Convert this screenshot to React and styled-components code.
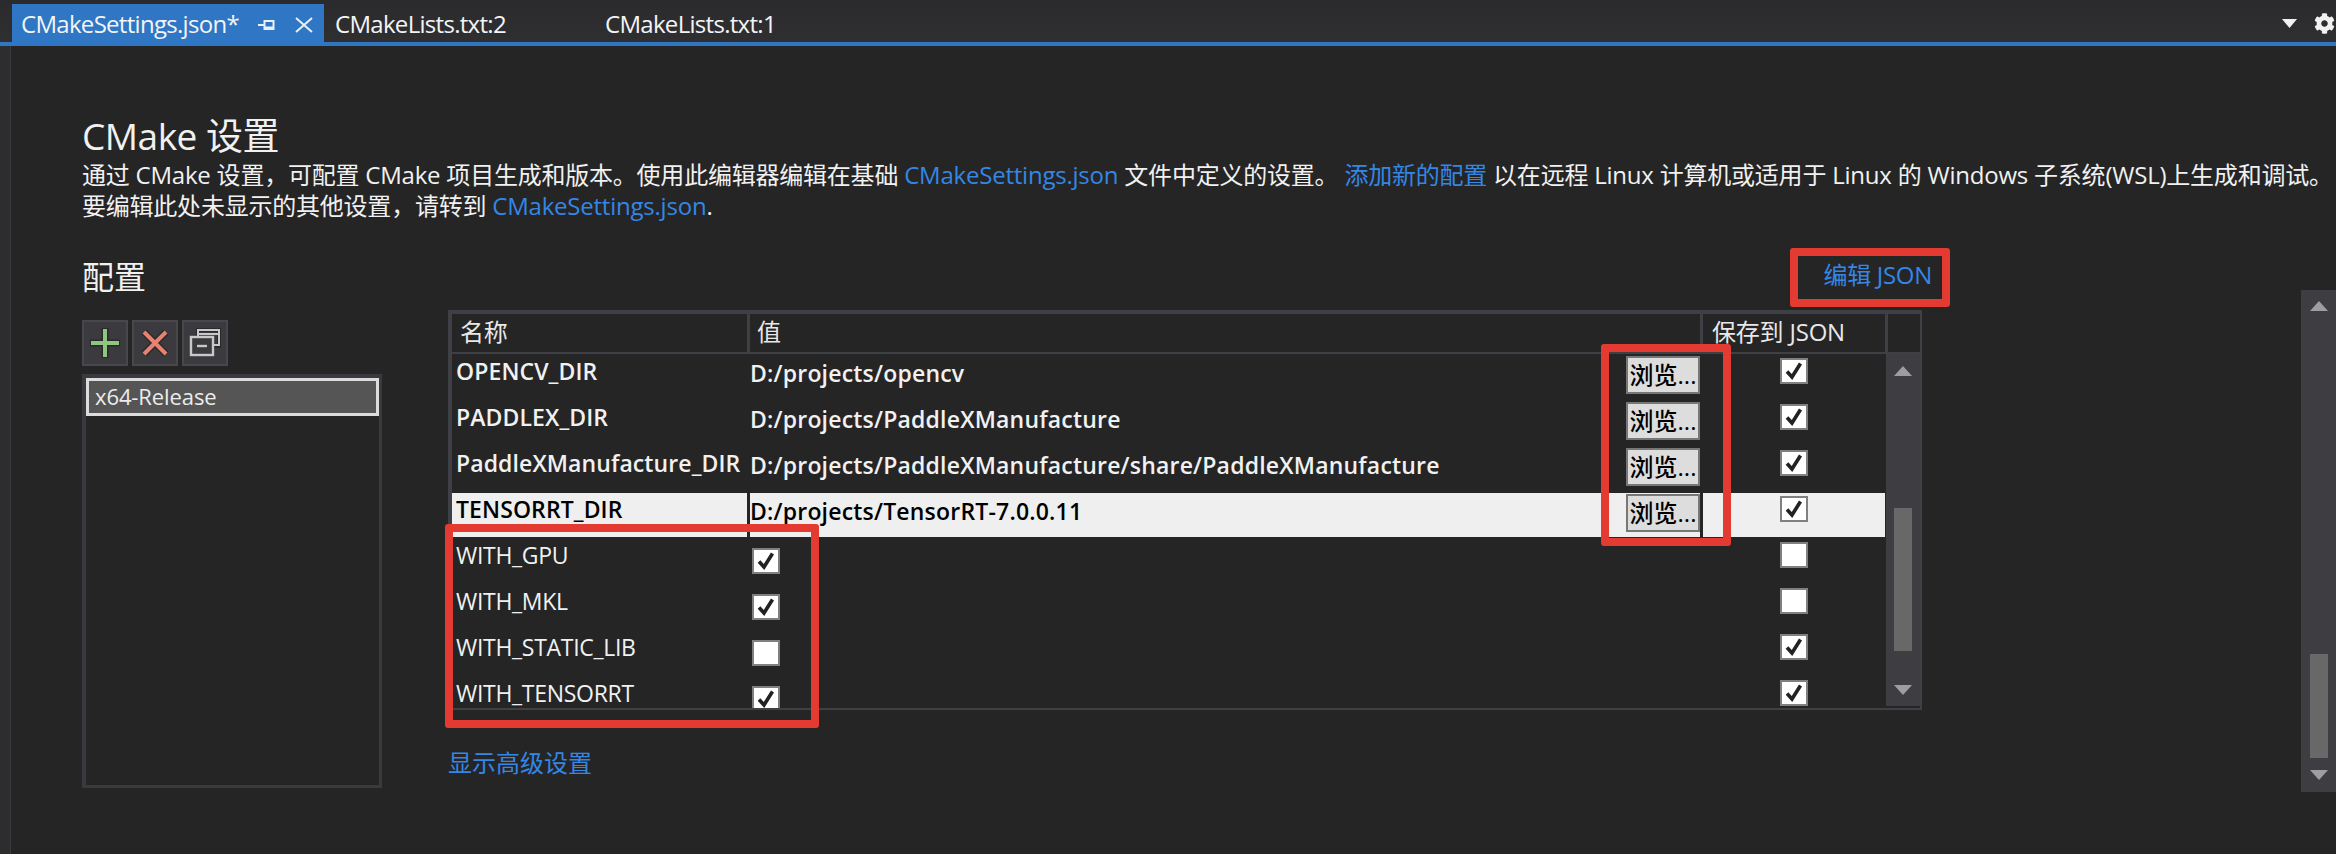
import React from "react";
import styled, { createGlobalStyle } from "styled-components";
import { FaCog } from "react-icons/fa";

const GlobalStyle = createGlobalStyle`
  html, body { margin: 0; padding: 0; background: #252526; }
  body { overflow: hidden; font-family: "Open Sans", "Noto Sans CJK SC", sans-serif; }
  * { box-sizing: border-box; }
`;

const Page = styled.div`
  position: relative;
  width: 2336px;
  height: 854px;
  overflow: hidden;
  background: #252526;
  color: #f1f1f1;
  display: flex;
  flex-direction: column;
`;

const TabBar = styled.div`
  height: 46px;
  flex: none;
  display: flex;
  align-items: flex-start;
  padding: 4px 0 0 12px;
  background: linear-gradient(#2b2b2e, #2f2f32);
  border-bottom: 4px solid #2f76c4;
`;

const Tab = styled.div`
  height: 42px;
  width: ${(p) => p.$width}px;
  flex: none;
  display: flex;
  align-items: center;
  padding-left: ${(p) => (p.$active ? 9 : 11)}px;
  background: ${(p) => (p.$active ? "#2f76c4" : "transparent")};
  font-size: 24px;
  line-height: 30px;
  letter-spacing: -0.7px;
  padding-bottom: 2px;
  color: #f4f4f4;
`;

const TabTitle = styled.span`
  width: ${(p) => p.$width}px;
  flex: none;
  white-space: nowrap;
`;

const TabIcons = styled.div`
  display: flex;
  align-items: center;
  gap: 20px;
  margin-top: 2px;
`;

const BarIcons = styled.div`
  margin-left: auto;
  height: 38px;
  display: flex;
  align-items: center;
  gap: 17px;
  margin-right: 1px;
  color: #f1f1f1;
`;

const Body = styled.div`
  flex: 1;
  display: flex;
  min-height: 0;
`;

const Gutter = styled.div`
  width: 11px;
  flex: none;
  background: #2d2d30;
  border-right: 1px solid #3a3a3f;
`;

const Content = styled.main`
  flex: 1;
  min-width: 0;
  padding: 67px 0 0 71px;
`;

const Title = styled.h1`
  margin: 0;
  font-size: 37px;
  line-height: 46px;
  font-weight: 400;
  letter-spacing: -0.5px;
  color: #f1f1f1;
`;

const Description = styled.p`
  margin: 0;
  font-size: 24px;
  line-height: 31px;
  white-space: nowrap;
  color: #f1f1f1;
  letter-spacing: -0.22px;
`;

const Link = styled.a`
  color: #3487e4;
  text-decoration: none;
`;

const ConfigHead = styled.div`
  width: 1850px;
  margin-top: 37px;
  height: 52px;
  display: flex;
  justify-content: space-between;
  align-items: flex-start;
`;

const SectionTitle = styled.h2`
  margin: 0;
  font-size: 32px;
  line-height: 38px;
  font-weight: 400;
  color: #f1f1f1;
`;

const EditLink = styled(Link)`
  font-size: 24px;
  line-height: 36px;
  margin-top: -1px;
  letter-spacing: -0.3px;
`;

const Columns = styled.div`
  display: flex;
  gap: 66px;
  align-items: flex-start;
`;

const Sidebar = styled.div`
  width: 300px;
  flex: none;
  padding-top: 10px;
  display: flex;
  flex-direction: column;
  gap: 8px;
`;

const ToolRow = styled.div`
  display: flex;
  gap: 4px;
`;

const ToolButton = styled.button`
  width: 46px;
  height: 46px;
  padding: 0;
  display: flex;
  align-items: center;
  justify-content: center;
  background: #3b3b3f;
  border: 2px solid #47474c;
`;

const ConfigList = styled.div`
  height: 414px;
  border: 4px solid #3a3a3e;
  border-width: 4px 3px 3px 4px;
`;

const ConfigItem = styled.div`
  height: 38px;
  border: 3px solid #dcdcdc;
  background: #555;
  padding-left: 6px;
  font-size: 22px;
  line-height: 30px;
  letter-spacing: -0.1px;
  color: #ececec;
`;

const TableColumn = styled.div`
  width: 1474px;
  flex: none;
`;

const Table = styled.div`
  height: 400px;
  border: solid #3f3f46;
  border-width: 4px 2px 2px 4px;
  display: flex;
  flex-direction: column;
`;

const HeaderRow = styled.div`
  height: 40px;
  flex: none;
  display: grid;
  grid-template-columns: 298px 953px 185px 32px;
  border-bottom: 2px solid #3f3f46;
`;

const HeaderCell = styled.div`
  height: 38px;
  padding-left: ${(p) => p.$pad}px;
  font-size: 24px;
  line-height: 36px;
  letter-spacing: -0.2px;
  border-right: 3px solid #3f3f46;
  color: #e8e8e8;
`;

const TableBody = styled.div`
  flex: 1;
  min-height: 0;
  display: flex;
`;

const Rows = styled.div`
  width: 1434px;
  flex: none;
  overflow: hidden;
`;

const Row = styled.div`
  height: 46px;
  display: grid;
  grid-template-columns: 298px 953px 182px;
  color: ${(p) => (p.$selected ? "#000" : "#f1f1f1")};
`;

const Cell = styled.div`
  height: ${(p) => (p.$selected ? 44 : 46)}px;
  margin-top: ${(p) => (p.$selected ? 1 : 0)}px;
  background: ${(p) => (p.$selected ? "#efefef" : "transparent")};
`;

const NameCell = styled(Cell)`
  margin-right: ${(p) => (p.$selected ? 3 : 0)}px;
  padding: ${(p) => (p.$selected ? 1 : 2)}px 0 0 4px;
  font-size: 23px;
  line-height: 30px;
  font-weight: ${(p) => (p.$bold ? 600 : 400)};
  letter-spacing: ${(p) => (p.$bold ? 0.1 : -0.3)}px;
  white-space: nowrap;
`;

const ValueCell = styled(Cell)`
  margin-right: ${(p) => (p.$selected ? 3 : 0)}px;
  display: flex;
  align-items: flex-start;
  justify-content: space-between;
  padding-top: ${(p) => (p.$selected ? 3 : 4)}px;
  font-size: 23px;
  line-height: 30px;
  font-weight: 600;
  letter-spacing: 0.2px;
  white-space: nowrap;
`;

const SaveCell = styled(Cell)`
  display: flex;
  justify-content: center;
  padding-top: ${(p) => (p.$selected ? 3 : 4)}px;
`;

const BrowseButton = styled.button`
  width: 74px;
  height: 38px;
  flex: none;
  margin-top: -2px;
  margin-right: ${(p) => (p.$selected ? 0 : 3)}px;
  padding: 0;
  background: #dddddd;
  border: 2px solid #777;
  color: #000;
  font-family: inherit;
  font-size: 24px;
  font-weight: 500;
  line-height: 32px;
  white-space: nowrap;
`;

const CheckBox = styled.span`
  display: flex;
  align-items: center;
  justify-content: center;
  width: 28px;
  height: 26px;
  flex: none;
  margin: ${(p) => (p.$inline ? "6px 0 0 2px" : 0)};
  background: #fff;
  border: 2px solid #808080;
`;

const ScrollTrack = styled.div`
  flex: none;
  width: ${(p) => p.$width}px;
  height: ${(p) => p.$height}px;
  margin-top: ${(p) => p.$top || 0}px;
  background: #3e3e42;
  display: flex;
  flex-direction: column;
  align-items: center;
`;

const ArrowSlot = styled.div`
  height: ${(p) => p.$height}px;
  flex: none;
  display: flex;
  align-items: center;
  justify-content: center;
`;

const TrackSpace = styled.div`
  flex: 1;
  width: 18px;
  display: flex;
  flex-direction: column;
  justify-content: flex-end;
`;

const Thumb = styled.div`
  width: 18px;
  height: ${(p) => p.$height}px;
  margin-bottom: ${(p) => p.$bottom || 0}px;
  background: #686868;
`;

const AdvancedLink = styled(Link)`
  display: block;
  margin-top: 36px;
  font-size: 24px;
  line-height: 34px;
`;

const Callout = styled.div`
  position: absolute;
  left: ${(p) => p.$x}px;
  top: ${(p) => p.$y}px;
  width: ${(p) => p.$w}px;
  height: ${(p) => p.$h}px;
  border: 8px solid #e33a32;
  border-radius: 3px;
  pointer-events: none;
`;

const Tick = () => (
  <svg width="22" height="20" viewBox="0 0 22 20">
    <path d="M4 10.5 L9 16 L17.5 2.5" fill="none" stroke="#222" strokeWidth="3.6" />
  </svg>
);

const Check = ({ on, inline }) => <CheckBox $inline={inline}>{on && <Tick />}</CheckBox>;

const Triangle = ({ down }) => (
  <svg width="18" height="10" viewBox="0 0 18 10">
    <path d={down ? "M0 0 H18 L9 10 Z" : "M0 10 H18 L9 0 Z"} fill="#9e9e9e" />
  </svg>
);

const PinIcon = () => (
  <svg width="17" height="12" viewBox="0 0 17 12">
    <path d="M0 6 H6 M6.5 1 V11 M6.5 2 H15.5 V10 H6.5 M6.5 8.5 H15.5" fill="none" stroke="#e8f0f8" strokeWidth="2" />
  </svg>
);

const CloseIcon = () => (
  <svg width="18" height="16" viewBox="0 0 18 16">
    <path d="M1 1 L17 15 M17 1 L1 15" fill="none" stroke="#e8f0f8" strokeWidth="2" />
  </svg>
);

const PlusIcon = () => (
  <svg width="34" height="34" viewBox="0 0 34 34">
    <path d="M17 2 V32 M2 17 H32" stroke="#2a2a2c" strokeWidth="7" fill="none" />
    <path d="M17 3 V31 M3 17 H31" stroke="#8ec680" strokeWidth="4" fill="none" />
  </svg>
);

const RemoveIcon = () => (
  <svg width="30" height="30" viewBox="0 0 30 30">
    <path d="M4 4 L26 26 M26 4 L4 26" stroke="#2a2a2c" strokeWidth="7" fill="none" />
    <path d="M4 4 L26 26 M26 4 L4 26" stroke="#e88270" strokeWidth="4" fill="none" />
  </svg>
);

const CloneIcon = () => (
  <svg width="32" height="30" viewBox="0 0 32 30">
    <path d="M9 9 V2 H30 V18 H23" fill="none" stroke="#2a2a2c" strokeWidth="4" />
    <path d="M9 8 V2 H30 V17 H24 M9 6 H30" fill="none" stroke="#c8c8c8" strokeWidth="2" />
    <rect x="2" y="9" width="22" height="18" fill="#3b3b3f" stroke="#c8c8c8" strokeWidth="2.4" />
    <path d="M8 18 H18" stroke="#c8c8c8" strokeWidth="2.4" />
  </svg>
);

const MenuArrow = () => (
  <svg width="15" height="9" viewBox="0 0 15 9">
    <path d="M0 0 H15 L7.5 9 Z" fill="#f1f1f1" />
  </svg>
);

const rows = [
  { name: "OPENCV_DIR", value: "D:/projects/opencv", save: true },
  { name: "PADDLEX_DIR", value: "D:/projects/PaddleXManufacture", save: true },
  { name: "PaddleXManufacture_DIR", value: "D:/projects/PaddleXManufacture/share/PaddleXManufacture", save: true },
  { name: "TENSORRT_DIR", value: "D:/projects/TensorRT-7.0.0.11", save: true, selected: true },
  { name: "WITH_GPU", flag: true, save: false },
  { name: "WITH_MKL", flag: true, save: false },
  { name: "WITH_STATIC_LIB", flag: false, save: true },
  { name: "WITH_TENSORRT", flag: true, save: true },
];

export default function App() {
  return (
    <Page>
      <GlobalStyle />
      <TabBar>
        <Tab $active $width={312}>
          <TabTitle $width={237}>CMakeSettings.json*</TabTitle>
          <TabIcons>
            <PinIcon />
            <CloseIcon />
          </TabIcons>
        </Tab>
        <Tab $width={270}>CMakeLists.txt:2</Tab>
        <Tab $width={270}>CMakeLists.txt:1</Tab>
        <BarIcons>
          <MenuArrow />
          <FaCog size={21} />
        </BarIcons>
      </TabBar>
      <Body>
        <Gutter />
        <Content>
          <Title>CMake 设置</Title>
          <Description>
            通过 CMake 设置，可配置 CMake 项目生成和版本。使用此编辑器编辑在基础 <Link>CMakeSettings.json</Link> 文件中定义的设置。 <Link>添加新的配置</Link> 以在远程 Linux 计算机或适用于 Linux 的 Windows 子系统(WSL)上生成和调试。
            <br />
            要编辑此处未显示的其他设置，请转到 <Link>CMakeSettings.json</Link>.
          </Description>
          <ConfigHead>
            <SectionTitle>配置</SectionTitle>
            <EditLink>编辑 JSON</EditLink>
          </ConfigHead>
          <Columns>
            <Sidebar>
              <ToolRow>
                <ToolButton><PlusIcon /></ToolButton>
                <ToolButton><RemoveIcon /></ToolButton>
                <ToolButton><CloneIcon /></ToolButton>
              </ToolRow>
              <ConfigList>
                <ConfigItem>x64-Release</ConfigItem>
              </ConfigList>
            </Sidebar>
            <TableColumn>
              <Table>
                <HeaderRow>
                  <HeaderCell $pad={8}>名称</HeaderCell>
                  <HeaderCell $pad={7}>值</HeaderCell>
                  <HeaderCell $pad={9}>保存到 JSON</HeaderCell>
                </HeaderRow>
                <TableBody>
                  <Rows>
                    {rows.map((row) => (
                      <Row key={row.name} $selected={row.selected}>
                        <NameCell $selected={row.selected} $bold={row.value !== undefined}>{row.name}</NameCell>
                        <ValueCell $selected={row.selected}>
                          {row.value !== undefined ? (
                            <>
                              {row.value}
                              <BrowseButton $selected={row.selected}>浏览...</BrowseButton>
                            </>
                          ) : (
                            <Check on={row.flag} inline />
                          )}
                        </ValueCell>
                        <SaveCell $selected={row.selected}><Check on={row.save} /></SaveCell>
                      </Row>
                    ))}
                  </Rows>
                  <ScrollTrack $width={34} $height={352}>
                    <ArrowSlot $height={34}><Triangle /></ArrowSlot>
                    <TrackSpace><Thumb $height={143} $bottom={23} /></TrackSpace>
                    <ArrowSlot $height={32}><Triangle down /></ArrowSlot>
                  </ScrollTrack>
                </TableBody>
              </Table>
              <AdvancedLink>显示高级设置</AdvancedLink>
            </TableColumn>
          </Columns>
        </Content>
        <ScrollTrack $width={35} $height={502} $top={244}>
          <ArrowSlot $height={32}><Triangle /></ArrowSlot>
          <TrackSpace><Thumb $height={104} /></TrackSpace>
          <ArrowSlot $height={34}><Triangle down /></ArrowSlot>
        </ScrollTrack>
      </Body>
      <Callout $x={1790} $y={248} $w={160} $h={59} />
      <Callout $x={1601} $y={344} $w={130} $h={202} />
      <Callout $x={445} $y={524} $w={374} $h={204} />
    </Page>
  );
}
